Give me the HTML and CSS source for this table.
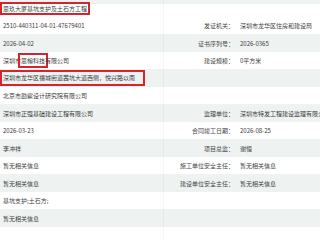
FILE: index.html
```html
<!DOCTYPE html>
<html lang="zh-CN">
<head>
<meta charset="utf-8">
<title>工程信息</title>
<link rel="stylesheet" href="styles.css">
</head>
<body>
<div class="table">
  <div class="row first">
    <div class="val left"><span class="mark mark-title">思玖大厦基坑支护及土石方工程</span></div>
    <div class="lbl"></div>
    <div class="val"></div>
  </div>
  <div class="row">
    <div class="val left">2510-440311-04-01-47679401</div>
    <div class="lbl">发证机关：</div>
    <div class="val">深圳市龙华区住房和建设局</div>
  </div>
  <div class="row alt">
    <div class="val left">2026-04-02</div>
    <div class="lbl">证书序列号：</div>
    <div class="val">2026-0365</div>
  </div>
  <div class="row">
    <div class="val left">深圳市<span class="mark mark-word">思榕科技</span>有限公司</div>
    <div class="lbl">建设规模：</div>
    <div class="val">0平方米</div>
  </div>
  <div class="row alt">
    <div class="val left"><span class="mark mark-addr">深圳市龙华区福城街道茜坑大道西侧，悦兴路以南</span></div>
    <div class="lbl"></div>
    <div class="val"></div>
  </div>
  <div class="row">
    <div class="val left">北京市勘察设计研究院有限公司</div>
    <div class="lbl"></div>
    <div class="val"></div>
  </div>
  <div class="row alt">
    <div class="val left">深圳市正强基础建设工程有限公司</div>
    <div class="lbl">监理单位：</div>
    <div class="val">深圳市特发工程建设监理有限公司</div>
  </div>
  <div class="row">
    <div class="val left">2026-03-23</div>
    <div class="lbl">合同竣工日期：</div>
    <div class="val">2026-08-25</div>
  </div>
  <div class="row alt">
    <div class="val left">李冲祥</div>
    <div class="lbl">项目总监：</div>
    <div class="val">谢恒</div>
  </div>
  <div class="row">
    <div class="val left">暂无相关信息</div>
    <div class="lbl">施工单位安全主任：</div>
    <div class="val">暂无相关信息</div>
  </div>
  <div class="row alt">
    <div class="val left">暂无相关信息</div>
    <div class="lbl">建设单位安全主任：</div>
    <div class="val">暂无相关信息</div>
  </div>
  <div class="row">
    <div class="val left">基坑支护;土石方;</div>
    <div class="lbl"></div>
    <div class="val"></div>
  </div>
  <div class="row alt">
    <div class="val left">暂无相关信息</div>
    <div class="lbl"></div>
    <div class="val"></div>
  </div>
  <div class="row">
    <div class="val left"></div>
    <div class="lbl"></div>
    <div class="val"></div>
  </div>
</div>
</body>
</html>
```

FILE: styles.css
```css
html, body {
  margin: 0;
  padding: 0;
  background: #ffffff;
}
body {
  width: 320px;
  height: 240px;
  overflow: hidden;
  font-family: "Noto Sans CJK SC", "Noto Sans", sans-serif;
  font-size: 6px;
  color: #3a3a3a;
}
.table {
  display: flex;
  flex-direction: column;
}
.row {
  display: grid;
  grid-template-columns: 163px 71px 1fr;
  height: 17.5px;
  flex: none;
  background: #ffffff;
}
.row.first {
  height: 16.75px;
  background: linear-gradient(#eef3f2 0, #eef3f2 4px, #ffffff 4px);
}
.row.alt {
  background: #eef3f2;
}
.val, .lbl {
  display: flex;
  align-items: center;
  white-space: nowrap;
  overflow: visible;
  min-width: 0;
}
.val {
  padding-left: 6px;
  overflow: hidden;
}
.val.left {
  padding-left: 3px;
  overflow: visible;
}
.lbl {
  justify-content: flex-end;
  border-left: 1px solid rgba(0, 0, 0, 0.035);
  color: #444;
}
.mark {
  display: inline-block;
  border: 2px solid #d8232d;
  box-sizing: border-box;
}
.mark-title {
  margin-left: -3px;
  padding: 0 1px;
  height: 13px;
  line-height: 9px;
}
.mark-word {
  margin: 0 -3px;
  padding: 0 1px;
  height: 15px;
  line-height: 11px;
}
.mark-addr {
  margin-left: -3px;
  padding: 0 8px 0 1px;
  height: 16px;
  line-height: 12px;
}
```
